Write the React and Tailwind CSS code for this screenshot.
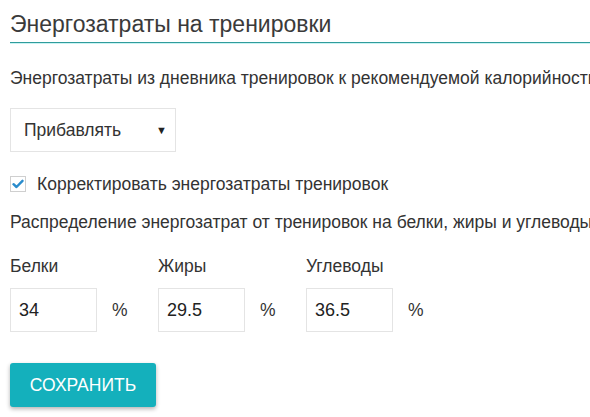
import React, { useState } from 'react';

const macros = [
  { label: 'Белки', value: '34' },
  { label: 'Жиры', value: '29.5' },
  { label: 'Углеводы', value: '36.5' },
];

const App = () => {
  const [checked, setChecked] = useState(true);

  return (
    <div className="min-h-screen bg-white pl-[10px] pt-[9px] font-['Liberation_Sans',Arial,sans-serif] text-[#333] overflow-hidden">
      <h2 className="text-[23px] leading-[30px] font-normal pb-[3px] border-b border-[#2f9c9c] shadow-[0_1px_0_#c9f3f3] text-[#3a3a3a]">
        Энергозатраты на тренировки
      </h2>

      <p className="mt-[23px] text-[17.5px] leading-[24px] whitespace-nowrap">
        Энергозатраты из дневника тренировок к рекомендуемой калорийности
      </p>

      <div className="mt-[18px] w-[166px] h-[44px] border border-[#e4e4e4] flex items-center justify-between pl-[13px] pr-[8px] text-[17.5px]">
        <span>Прибавлять</span>
        <span className="text-[11px] text-[#222]">▼</span>
      </div>

      <label className="mt-[20px] flex items-center h-[24px] text-[17.5px] cursor-pointer" onClick={() => setChecked(!checked)}>
        <span className="w-[16px] h-[16px] border border-[#cfcfcf] bg-white flex items-center justify-center">
          {checked && (
            <svg width="12" height="10" viewBox="0 0 12 10">
              <path d="M1.5 5.2 L4.5 8 L10.5 1.8" fill="none" stroke="#2a8ccc" strokeWidth="2.4" strokeLinecap="round" strokeLinejoin="round" />
            </svg>
          )}
        </span>
        <span className="ml-[11px]">Корректировать энергозатраты тренировок</span>
      </label>

      <p className="mt-[14px] text-[17.5px] leading-[24px] whitespace-nowrap">
        Распределение энергозатрат от тренировок на белки, жиры и углеводы
      </p>

      <div className="mt-[20px] flex">
        {macros.map((m) => (
          <div key={m.label} className="w-[148px]">
            <div className="text-[17.5px] leading-[24px]">{m.label}</div>
            <div className="mt-[10px] flex items-center">
              <div className="w-[87px] h-[44px] border border-[#e4e4e4] flex items-center pl-[8px] text-[18px] text-[#222]">
                {m.value}
              </div>
              <span className="ml-[15px] text-[17.5px]">%</span>
            </div>
          </div>
        ))}
      </div>

      <button className="mt-[31px] w-[146px] h-[44px] rounded-[3px] bg-[#14b0bc] text-white text-[17.5px] uppercase shadow-[0_2px_4px_rgba(0,0,0,0.3)]">
        Сохранить
      </button>
    </div>
  );
};

export default App;
